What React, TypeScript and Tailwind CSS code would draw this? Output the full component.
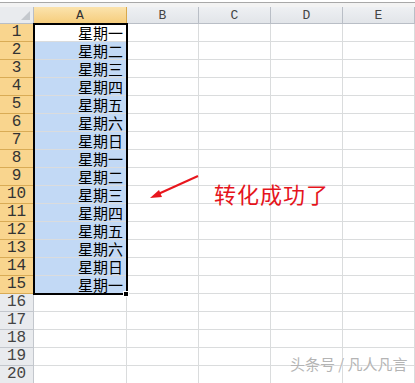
const cols = ["A", "B", "C", "D", "E"]
const days = [
    "星期一", "星期二", "星期三", "星期四", "星期五", "星期六", "星期日",
    "星期一", "星期二", "星期三", "星期四", "星期五", "星期六", "星期日", "星期一",
]
const rows = Array.from({ length: 20 }, (_, i) => i + 1)

export default function App() {
    return (
        <div className="relative w-[415px] h-[383px] overflow-hidden bg-white">
            {/* formula bar edge */}
            <div className="h-[7px] bg-[#f3f3f3] border-t-2 border-t-white">
                <div className="h-px bg-[#a8a8a8]" />
            </div>

            <div className="grid grid-cols-[34px_93px_72px_72px_72px_72px] auto-rows-[18px] grid-rows-[17px]">
                {/* header row */}
                <div className="relative bg-[#e9ebee] border-r border-b border-[#b9bec6]">
                    <div className="absolute right-[3px] bottom-[3px] w-0 h-0 border-l-[9px] border-l-transparent border-b-[9px] border-b-[#c4c8cd]" />
                </div>
                {cols.map((c) => (
                    <div
                        key={c}
                        className={`flex items-center justify-center border-r border-b text-[13px] leading-none ${c === "A"
                            ? "bg-gradient-to-b from-[#fbe3ad] to-[#f6cd7c] border-[#d8a94d] text-[#333]"
                            : "bg-gradient-to-b from-[#eef0f3] to-[#e2e5e9] border-[#b9bec6] text-[#444]"
                            }`}
                        style={{ fontFamily: '"Liberation Mono", monospace' }}
                    >
                        {c}
                    </div>
                ))}

                {/* body rows */}
                {rows.map((r) => (
                    <Row key={r} r={r} />
                ))}
            </div>

            {/* selection A1:A15 */}
            <div className="absolute left-[33px] top-[23px] w-[95px] h-[272px] border-2 border-black pointer-events-none" />
            <div className="absolute left-[123px] top-[291px] w-[6px] h-[6px] bg-black border border-white" />

            {/* annotation */}
            <svg className="absolute left-0 top-0" width="415" height="383">
                <line x1="198" y1="176" x2="156" y2="195" stroke="#e8161d" strokeWidth="2" />
                <path d="M150 198 L159 190 L162 197 Z" fill="#e8161d" />
            </svg>
            <div
                className="absolute left-[214px] top-[182px] text-[22px] leading-none tracking-[1px] text-[#e5141c]"
                style={{ fontFamily: '"Noto Sans CJK SC", sans-serif' }}
            >
                转化成功了
            </div>
            <div
                className="absolute left-[290px] top-[356px] text-[15px] leading-none text-[#b4b4b4]"
                style={{ fontFamily: '"Noto Sans CJK SC", sans-serif', textShadow: "0 0 2px #fff" }}
            >
                头条号 / 凡人凡言
            </div>
        </div>
    )
}

function Row({ r }: { r: number }) {
    const sel = r <= 15
    return (
        <>
            <div
                className={`flex items-center justify-center border-r border-b text-[16px] leading-[17px] ${sel
                    ? "bg-[#f9d58e] border-[#d9ab55] text-[#333]"
                    : "bg-[#e9ebee] border-[#c3c7cd] text-[#444]"
                    }`}
                style={{ fontFamily: '"Liberation Mono", monospace' }}
            >
                {r}
            </div>
            <div
                className={`flex items-center justify-end pr-[3px] border-r border-b border-[#dadcdd] text-[15px] leading-[17px] text-black ${sel && r > 1 ? "bg-[#c2d9f5]" : "bg-white"
                    }`}
                style={{ fontFamily: '"Noto Sans CJK SC", sans-serif' }}
            >
                {sel ? days[r - 1] : ""}
            </div>
            <div className="border-r border-b border-[#dadcdd]" />
            <div className="border-r border-b border-[#dadcdd]" />
            <div className="border-r border-b border-[#dadcdd]" />
            <div className="border-r border-b border-[#dadcdd]" />
        </>
    )
}
